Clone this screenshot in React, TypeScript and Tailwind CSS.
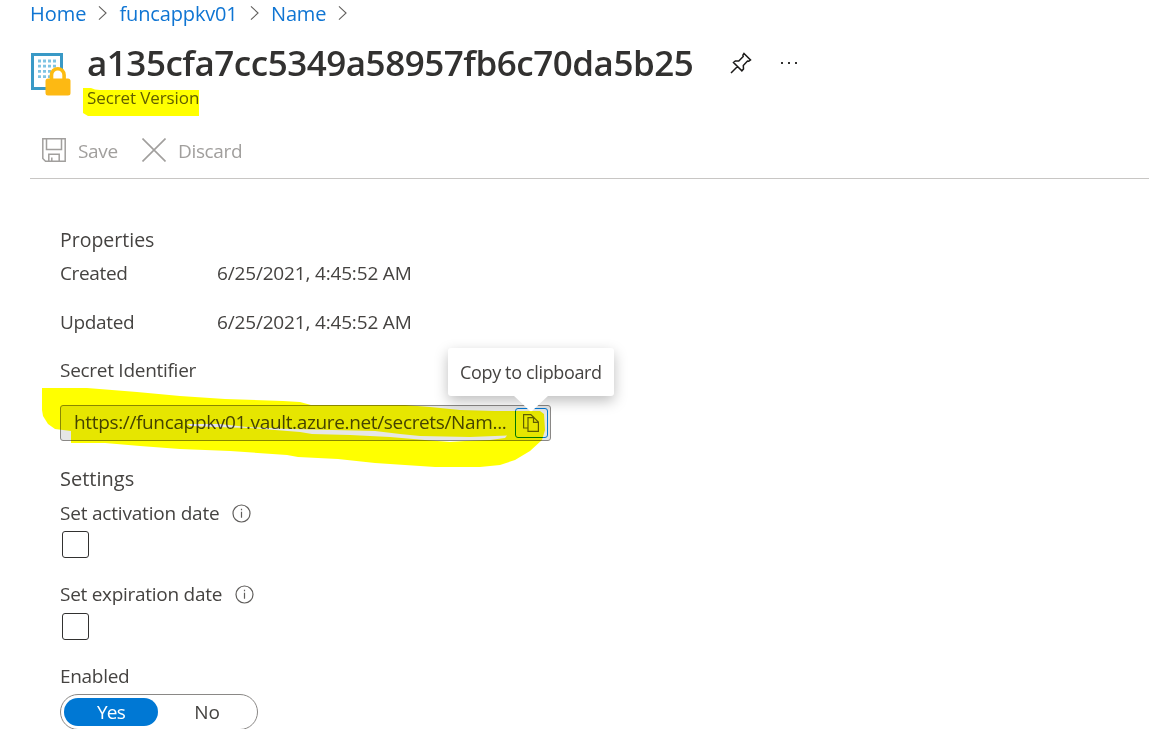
import React from 'react';

interface InfoLabelProps {
  label: string;
  spacing: string;
}

const breadcrumbs = [
  { label: 'Home', className: 'w-[56px]' },
  { label: 'funcappkv01', className: 'w-[118px] tracking-[-0.15px]' },
  { label: 'Name', className: 'w-[55px] tracking-[-0.15px]' },
];

const properties = [
  { label: 'Created', value: '6/25/2021, 4:45:52 AM' },
  { label: 'Updated', value: '6/25/2021, 4:45:52 AM' },
];

const Chevron = () => (
  <svg className="mx-[12px] mb-[2px] h-4 w-[9.5px] shrink-0" viewBox="0 0 10 16" fill="none" stroke="#605e5c" strokeWidth="1.1">
    <path d="M1 1l7.5 7L1 15" />
  </svg>
);

const SecretIcon = () => (
  <svg className="h-[44px] w-[40px] shrink-0" viewBox="0 0 40 44">
    <rect x="1.5" y="2.5" width="29" height="34" fill="#fff" stroke="#3999c6" strokeWidth="3" />
    {[8, 13.2, 18.4, 23.6].map((y) => (
      <path key={y} d={`M7 ${y + 1}h20`} stroke="#7fc4e3" strokeWidth="2.8" strokeDasharray="3 2" />
    ))}
    <path d="M20.5 28v-5a6.3 6.3 0 0 1 12.6 0v5" fill="#fff" stroke="#fcbc12" strokeWidth="3.6" />
    <rect x="14.5" y="26.5" width="25" height="17" rx="2.5" fill="#fdb913" />
  </svg>
);

const PinIcon = () => (
  <svg className="h-[22px] w-[22px]" viewBox="0 0 22 22" fill="none" stroke="#1b1a19" strokeWidth="1.5">
    <path d="M14 1.5l6.5 6.5-1.7 1.2-1.3-.2-4.2 4.5.2 3.5-1.6 1.8L3.5 10.5l1.8-1.6 3.5.2L13.2 4.6l-.3-1.5zM7.5 14.5L1 21" />
  </svg>
);

const SaveIcon = () => (
  <svg className="h-6 w-6" viewBox="0 0 24 24" fill="none" stroke="#a19f9d" strokeWidth="1.5">
    <path d="M.8 .8h22.4v22.4H3.5L.8 20.5zM4.5 .8v10.7h15V.8M6.800 23.2v-6.9h10.4v6.9M9.8 23v-3.5" />
  </svg>
);

const CopyIcon = () => (
  <svg className="h-[18px] w-4" viewBox="0 0 16 18" fill="none" stroke="#605e5c" strokeWidth="1.2">
    <path d="M4.5 14H.6V.6h7.2l3.4 3.2M5 3.6h5.9l4.5 4.4v9.4H5zM10.5 3.8V8.4h4.8" />
  </svg>
);

const InfoLabel: React.FC<InfoLabelProps> = ({ label, spacing }) => (
  <div className="flex h-[26px] items-center gap-[13px]">
    <span className={spacing}>{label}</span>
    <svg className="h-[19px] w-[19px]" viewBox="0 0 19 19" fill="none" stroke="#605e5c" strokeWidth="1.2">
      <circle cx="9.5" cy="9.5" r="8.5" />
      <path d="M9.5 7.8v6M9.5 4.8v1.4" />
    </svg>
  </div>
);

const App: React.FC = () => {
  return (
    <div className="relative h-[729px] w-[1149px] overflow-hidden whitespace-nowrap bg-white pl-[30px] font-['Open_Sans','Noto_Sans',sans-serif] text-[19px] text-[#454341]">
      <nav className="flex h-[27px] items-center text-[20px] text-[#0f75d3]">
        {breadcrumbs.map((crumb) => (
          <React.Fragment key={crumb.label}>
            <a className={`shrink-0 ${crumb.className}`}>{crumb.label}</a>
            <Chevron />
          </React.Fragment>
        ))}
      </nav>

      <header className="flex h-[99px] pt-[12px]">
        <div className="pl-[1px] pt-[13px]">
          <SecretIcon />
        </div>
        <div className="pl-4">
          <div className="flex h-[48px] items-center">
            <h1 className="w-[606px] text-[35px] font-semibold tracking-[-0.48px] text-[#323130]">a135cfa7cc5349a58957fb6c70da5b25</h1>
            <span className="ml-[37px]"><PinIcon /></span>
            <span className="ml-[29px] flex gap-[5px]">
              {[0, 1, 2].map((dot) => (
                <i key={dot} className="h-[2px] w-[2px] bg-[#323130]" />
              ))}
            </span>
          </div>
          <div className="h-[24px] text-[17px] leading-[21px] tracking-[-0.1px] text-[#605e5c]">Secret Version</div>
        </div>
      </header>

      <div className="flex h-[53px] items-center border-b border-[#c8c6c4] pb-[4px] pl-[12px] tracking-[-0.35px] text-[#a19f9d]">
        <SaveIcon />
        <span className="ml-3 w-[64px] pt-[2px]">Save</span>
        <svg className="h-6 w-6" viewBox="0 0 24 24" stroke="#a19f9d" strokeWidth="1.6">
          <path d="M.5 .5l23 23M23.5 .5l-23 23" />
        </svg>
        <span className="ml-3 pt-[2px]">Discard</span>
      </div>

      <main className="pl-[30px] pt-[48px]">
        <h2 className="h-[26px] text-[19.5px] leading-[25px]">Properties</h2>
        <dl className="mt-[7px] grid gap-[23px]">
          {properties.map((item) => (
            <div key={item.label} className="flex h-[26px] items-center">
              <dt className="w-[157px] tracking-[-0.35px]">{item.label}</dt>
              <dd className="tracking-[-0.17px]">{item.value}</dd>
            </div>
          ))}
        </dl>

        <div className="mt-[22px] h-[26px] leading-[26px] tracking-[-0.28px]">Secret Identifier</div>
        <div className="mt-[22px] flex h-[36px] w-[491px] items-center rounded-[3px] border border-[#8a8886] bg-[#e6e6e6] pl-[13px]">
          <span className="w-[441px] pb-[2px] tracking-[-0.35px]">https://funcappkv01.vault.azure.net/secrets/Nam...</span>
          <button className="flex h-[30px] w-[33px] shrink-0 items-center justify-center rounded-[3px] border border-[#0078d4] pr-[2px]">
            <CopyIcon />
          </button>
        </div>

        <h2 className="mt-[25px] h-[26px] text-[20px] leading-[25px]">Settings</h2>
        <div className="mt-2">
          <InfoLabel label="Set activation date" spacing="tracking-[-0.2px]" />
          <div className="ml-[2px] mt-[5px] h-[27px] w-[27px] rounded-[3px] border border-[#323130]" />
        </div>
        <div className="mt-[23px]">
          <InfoLabel label="Set expiration date" spacing="tracking-[-0.28px]" />
          <div className="ml-[2px] mt-[6px] h-[27px] w-[27px] rounded-[3px] border border-[#323130]" />
        </div>

        <div className="mt-[23px] h-[26px] leading-[26px] tracking-[-0.3px]">Enabled</div>
        <div className="mt-[5px] flex h-[36px] w-[198px] items-center rounded-full border border-[#8a8886] pl-[3px] text-center leading-[28px]">
          <span className="h-[28px] w-[94px] rounded-full bg-[#0078d4] font-medium tracking-[-0.8px] text-white">Yes</span>
          <span className="w-[98px]">No</span>
        </div>
      </main>

      {/* Copy tooltip */}
      <div className="absolute left-[448px] top-[348px] flex h-[48px] w-[166px] items-center rounded-[3px] bg-white pl-[12px] text-[18px] tracking-[-0.35px] shadow-[0_5px_14px_rgba(0,0,0,0.26)]">
        <span>Copy to clipboard</span>
        <svg className="absolute left-[65px] top-[47px]" width="36" height="18" fill="#fff">
          <path d="M0 0h36L18 17z" />
        </svg>
      </div>

      {/* Highlighter strokes */}
      <svg className="pointer-events-none absolute left-0 top-0 mix-blend-multiply" width="1149" height="729" fill="#ff0" fillRule="evenodd">
        <path d="M83 88h8l4 1.5 5 .5h99v26H88l-5-3z" />
        <path d="M42 388H87L137 392L180 396L225 399L283 401L300 402L311 405H405L430 407L460 410L495 411H540L544 414L545 430L542 440L530 451L515 460L500 465L480 467H435L375 463L338 459L298 457L287 455L230 451L180 449L140 446L105 443H71V431L55 429L48 424L43 416L42 410Z M187 424L220 424L247 427L290 429L375 431L400 434L420 436L470 437L507 435.5L505 438L490 440L465 441L450 442L425 440L390 437L350 435L312 434L300 432L275 430L250 428L215 427L190 426Z" />
      </svg>
    </div>
  );
};

export default App;
